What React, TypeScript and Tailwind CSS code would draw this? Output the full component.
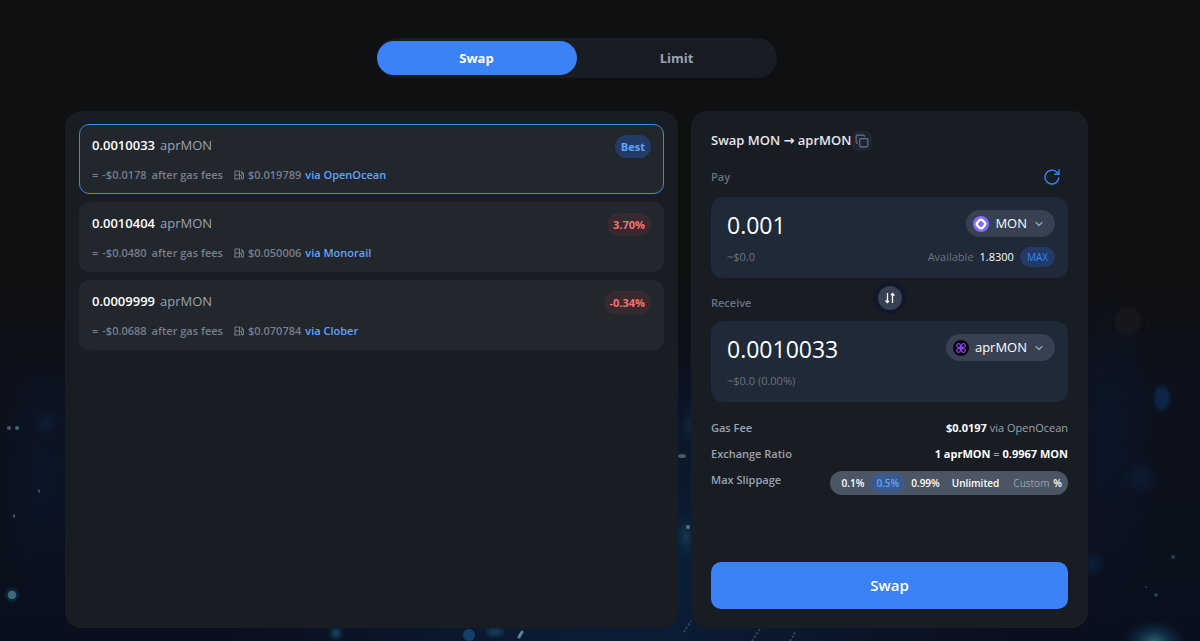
import React, { useState } from 'react';
import { ChevronDown, Copy } from 'lucide-react';
import { RiGasStationLine } from 'react-icons/ri';

interface Quote {
  id: number;
  amount: string;
  net: string;
  gas: string;
  source: string;
  diff: string;
}

const quotes: Quote[] = [
  { id: 1, amount: '0.0010033', net: '-$0.0178', gas: '$0.019789', source: 'OpenOcean', diff: 'Best' },
  { id: 2, amount: '0.0010404', net: '-$0.0480', gas: '$0.050006', source: 'Monorail', diff: '3.70%' },
  { id: 3, amount: '0.0009999', net: '-$0.0688', gas: '$0.070784', source: 'Clober', diff: '-0.34%' },
];

const slippageOptions = ['0.1%', '0.5%', '0.99%', 'Unlimited'];

const Backdrop: React.FC = () => (
  <svg
    className="absolute inset-0 h-full w-full"
    viewBox="0 0 1200 641"
    preserveAspectRatio="xMidYMid slice"
    aria-hidden="true"
  >
    <defs>
      <linearGradient id="sky" x1="0" y1="0" x2="0" y2="1">
        <stop offset="0.44" stopColor="#0f1012" />
        <stop offset="0.6" stopColor="#0c111c" />
        <stop offset="1" stopColor="#0a0f1d" />
      </linearGradient>
      <radialGradient id="haze">
        <stop offset="0" stopColor="#0b2444" stopOpacity="0.8" />
        <stop offset="1" stopColor="#0b2444" stopOpacity="0" />
      </radialGradient>
      <radialGradient id="glow">
        <stop offset="0" stopColor="#2f6f72" />
        <stop offset="0.5" stopColor="#123f5c" stopOpacity="0.6" />
        <stop offset="1" stopColor="#0b2444" stopOpacity="0" />
      </radialGradient>
      <filter id="soft" x="-50%" y="-50%" width="200%" height="200%">
        <feGaussianBlur stdDeviation="2" />
      </filter>
    </defs>
    <rect width="1200" height="641" fill="url(#sky)" />
    <ellipse cx="620" cy="580" rx="400" ry="240" fill="url(#haze)" />
    <ellipse cx="46" cy="480" rx="46" ry="130" fill="url(#haze)" opacity="0.35" />
    <ellipse cx="46" cy="422" rx="14" ry="14" fill="url(#haze)" opacity="0.7" />
    <ellipse cx="1110" cy="440" rx="46" ry="180" fill="url(#haze)" opacity="0.35" />
    <ellipse cx="1162" cy="398" rx="8" ry="12" fill="#0c2746" filter="url(#soft)" />
    <ellipse cx="1141" cy="478" rx="18" ry="18" fill="url(#haze)" opacity="0.7" />
    <ellipse cx="1128" cy="321" rx="14" ry="14" fill="#12171b" filter="url(#soft)" />
    <ellipse cx="1092" cy="564" rx="14" ry="14" fill="url(#haze)" />
    <ellipse cx="1154" cy="643" rx="32" ry="24" fill="url(#glow)" />
    <ellipse cx="686" cy="536" rx="16" ry="26" fill="url(#glow)" opacity="0.35" />
    <ellipse cx="690" cy="425" rx="14" ry="26" fill="url(#glow)" opacity="0.2" />
    <ellipse cx="682" cy="456" rx="4" ry="2" fill="#4b5a60" />
    <circle cx="688" cy="527" r="2" fill="#55757a" />
    <circle cx="12" cy="595" r="9" fill="url(#glow)" />
    <circle cx="12" cy="595" r="4" fill="#3f6b76" />
    <circle cx="9" cy="428" r="2" fill="#4a5962" />
    <circle cx="17" cy="428" r="2" fill="#3d6b78" />
    <ellipse cx="39" cy="491" rx="1" ry="2" fill="#34506b" />
    <ellipse cx="14" cy="516" rx="1" ry="2" fill="#4a5962" />
    <circle cx="1173" cy="557" r="2" fill="#21404f" />
    <circle cx="1156" cy="595" r="2" fill="#21404f" />
    <circle cx="1146" cy="587" r="1" fill="#21404f" />
    <circle cx="336" cy="633" r="5" fill="#17415c" filter="url(#soft)" />
    <circle cx="469" cy="635" r="6" fill="#12406a" />
    <ellipse cx="495" cy="632" rx="9" ry="4" fill="#123a5c" filter="url(#soft)" />
    <path d="M519 637l3-5" stroke="#5b8390" strokeWidth="3" strokeLinecap="round" />
    <path d="M684 632l7-11M752 641l8-12M790 641l6-10" stroke="#35465f" strokeWidth="2" strokeDasharray="2 2" />
  </svg>
);

const RefreshIcon: React.FC = () => (
  <svg viewBox="0 0 16 16" className="size-4" fill="none" stroke="currentColor" strokeWidth="1.4">
    <path d="M14.8 8.2A6.9 6.9 0 1 1 12.6 3l2.2 2.1" />
    <path d="M15 .6v4.7h-4.7" />
  </svg>
);

const SwapIcon: React.FC = () => (
  <svg viewBox="0 0 12 12" className="size-3" fill="none" stroke="currentColor" strokeWidth="1.3">
    <path d="M3.5 1v9.5M1.5 8.5l2 2 1.6-1.6M8.5 11V1.5M10.5 3.5l-2-2-1.6 1.6" />
  </svg>
);

const MonIcon: React.FC = () => (
  <svg viewBox="0 0 16 16" className="size-4">
    <circle cx="8" cy="8" r="8" fill="#836ef9" />
    <rect x="4.3" y="4.3" width="7.4" height="7.4" rx="2.6" fill="none" stroke="#fff" strokeWidth="2.2" transform="rotate(40 8 8)" />
  </svg>
);

const AprIcon: React.FC = () => (
  <svg viewBox="0 0 16 16" className="size-4">
    <circle cx="8" cy="8" r="8" fill="#07070b" />
    <g fill="none" stroke="#8344e0" strokeWidth="1.2">
      <path d="M7.4 7.4H5.4a1.9 1.9 0 1 1 2-2zM8.6 7.4v-2a1.9 1.9 0 1 1 2 2zM8.6 8.6h2a1.9 1.9 0 1 1-2 2zM7.4 8.6v2a1.9 1.9 0 1 1-2-2z" />
    </g>
  </svg>
);

const TokenButton: React.FC<{ symbol: string; icon: React.ReactNode }> = ({ symbol, icon }) => (
  <button className="flex h-[27px] items-center gap-[6px] rounded-full bg-[#374151] pr-[10px] pl-[7px] text-[13px] font-medium text-white">
    {icon}
    {symbol}
    <ChevronDown className="size-3 text-[#9ca3af]" strokeWidth={2.5} />
  </button>
);

const QuoteCard: React.FC<{ quote: Quote; selected: boolean; onSelect: () => void }> = ({ quote, selected, onSelect }) => (
  <button
    onClick={onSelect}
    className={`flex w-full flex-col gap-[7px] rounded-[10px] border bg-[#22262d] px-3 pt-[9px] pb-2 text-left ${
      selected ? 'border-[#4a86cf]' : 'border-transparent'
    }`}
  >
    <span className="flex h-6 w-full items-center justify-between">
      <span className="flex items-center gap-[5px] text-[13px] font-semibold">
        <span className="text-white">{quote.amount}</span>
        <span className="font-medium text-[#9ca3af]">aprMON</span>
      </span>
      <span
        className={`rounded-full px-[6px] text-[11px] leading-[23px] font-bold ${
          quote.diff === 'Best' ? 'bg-[#233b66] text-[#60a5fa]' : 'bg-[#37292f] text-[#f87171]'
        }`}
      >
        {quote.diff}
      </span>
    </span>
    <span className="flex h-5 items-center text-[11px] font-semibold text-[#787f8b]">
      <span>=</span>
      <span className="ml-1">{quote.net}</span>
      <span className="ml-[5px]">after gas fees</span>
      <RiGasStationLine className="ml-[10px] size-3" />
      <span className="ml-[3px]">{quote.gas}</span>
      <span className="ml-1 text-[#60a5fa]">via {quote.source}</span>
    </span>
  </button>
);

const App: React.FC = () => {
  const [mode, setMode] = useState('Swap');
  const [selectedId, setSelectedId] = useState(1);
  const [amount, setAmount] = useState('0.001');
  const [slippage, setSlippage] = useState('0.5%');

  return (
    <div className="relative min-h-screen overflow-hidden bg-[#0f1012] font-['Open_Sans','Noto_Sans',sans-serif]">
      <Backdrop />
      <main className="relative flex min-h-screen flex-col pt-[38px] pr-28 pb-[13px] pl-[65px]">
        <div className="mx-auto flex h-10 w-full max-w-[400px] items-center rounded-full bg-[#181c23]">
          {['Swap', 'Limit'].map((tab) => (
            <button
              key={tab}
              onClick={() => setMode(tab)}
              className={`h-[34px] flex-1 rounded-full pt-px text-[13px] font-bold ${
                mode === tab ? 'bg-[#3b82f6] text-white' : 'text-[#9ca3af]'
              }`}
            >
              {tab}
            </button>
          ))}
        </div>

        <div className="mt-[33px] grid flex-1 grid-cols-[minmax(0,1fr)_397px] gap-[13px]">
          <section className="flex flex-col gap-2 rounded-2xl bg-[#181c23] px-[14px] py-[13px]">
            {quotes.map((quote) => (
              <QuoteCard
                key={quote.id}
                quote={quote}
                selected={quote.id === selectedId}
                onSelect={() => setSelectedId(quote.id)}
              />
            ))}
          </section>

          <section className="flex flex-col rounded-2xl bg-[#181c23] px-5 pt-5 pb-[19px]">
            <div className="flex h-5 items-center gap-px">
              <h2 className="text-[13px] font-semibold text-[#e5e7eb]">
                Swap MON <span className="font-['DejaVu_Sans']">→</span> aprMON
              </h2>
              <button aria-label="Copy" className="flex size-5 items-center justify-center rounded-md bg-[#1d2632] text-[#6b7280]">
                <Copy className="size-[14px]" />
              </button>
            </div>

            <div className="mt-4 flex h-5 items-center justify-between pr-2">
              <label htmlFor="pay" className="text-[11px] font-semibold text-[#6b7280]">Pay</label>
              <button aria-label="Refresh" className="text-[#3b82f6]">
                <RefreshIcon />
              </button>
            </div>

            <div className="mt-[10px] rounded-xl bg-[#1f2937] pt-[13px] pr-[13px] pb-[11px] pl-4">
              <div className="flex h-[27px] items-center justify-between">
                <input
                  id="pay"
                  value={amount}
                  onChange={(e) => setAmount(e.target.value)}
                  className="h-8 w-40 bg-transparent pt-1 text-[23px] text-white outline-none"
                />
                <TokenButton symbol="MON" icon={<MonIcon />} />
              </div>
              <div className="mt-[10px] flex h-5 items-center justify-between text-[11px] text-[#6b7280]">
                <span>~$0.0</span>
                <span className="flex items-center gap-[6px]">
                  <span className="font-medium">Available</span>
                  <span className="font-medium text-white">1.8300</span>
                  <button className="h-5 rounded-full bg-[#213a66] px-[7px] text-[10px] text-[#3b82f6]">MAX</button>
                </span>
              </div>
            </div>

            <div className="grid h-[43px] grid-cols-[1fr_auto_1fr] items-start pt-1">
              <label htmlFor="receive" className="pt-[11px] text-[11px] leading-5 font-semibold text-[#6b7280]">Receive</label>
              <button
                aria-label="Switch tokens"
                className="flex size-8 items-center justify-center rounded-full border-4 border-[#10182a] bg-[#374151] text-white"
              >
                <SwapIcon />
              </button>
            </div>

            <div className="rounded-xl bg-[#1f2937] pt-[13px] pr-[13px] pb-[11px] pl-4">
              <div className="flex h-[27px] items-center justify-between">
                <input
                  id="receive"
                  readOnly
                  value="0.0010033"
                  className="h-8 w-40 bg-transparent pt-1 text-[23px] text-white outline-none"
                />
                <TokenButton symbol="aprMON" icon={<AprIcon />} />
              </div>
              <div className="mt-[10px] h-5 text-[11px] leading-5 text-[#6b7280]">~$0.0 (0.00%)</div>
            </div>

            <div className="mt-4 flex flex-col gap-[6px] text-[11px] leading-5 font-semibold text-[#9ca3af]">
              <div className="flex justify-between">
                <span>Gas Fee</span>
                <span className="font-medium"><span className="font-bold text-white">$0.0197</span> via OpenOcean</span>
              </div>
              <div className="flex justify-between">
                <span>Exchange Ratio</span>
                <span><span className="font-bold text-white">1 aprMON</span> = <span className="font-bold text-white">0.9967 MON</span></span>
              </div>
              <div className="flex items-start justify-between">
                <span>Max Slippage</span>
                <div className="mt-px flex h-6 items-center rounded-full bg-[#4b5563] px-[6px] text-[10px] text-white">
                  {slippageOptions.map((option) => (
                    <button
                      key={option}
                      onClick={() => setSlippage(option)}
                      className={`h-5 rounded-full px-[6px] ${slippage === option ? 'bg-[#3a5a8f] text-[#60a5fa]' : ''}`}
                    >
                      {option}
                    </button>
                  ))}
                  <input
                    aria-label="Custom slippage"
                    placeholder="Custom"
                    className="ml-2 w-10 bg-transparent font-medium placeholder-[#9ca3af] outline-none"
                  />
                  <span>%</span>
                </div>
              </div>
            </div>

            <button className="mt-auto h-[47px] rounded-[10px] bg-[#3b82f6] text-[15px] font-semibold text-white">Swap</button>
          </section>
        </div>
      </main>
    </div>
  );
};

export default App;
